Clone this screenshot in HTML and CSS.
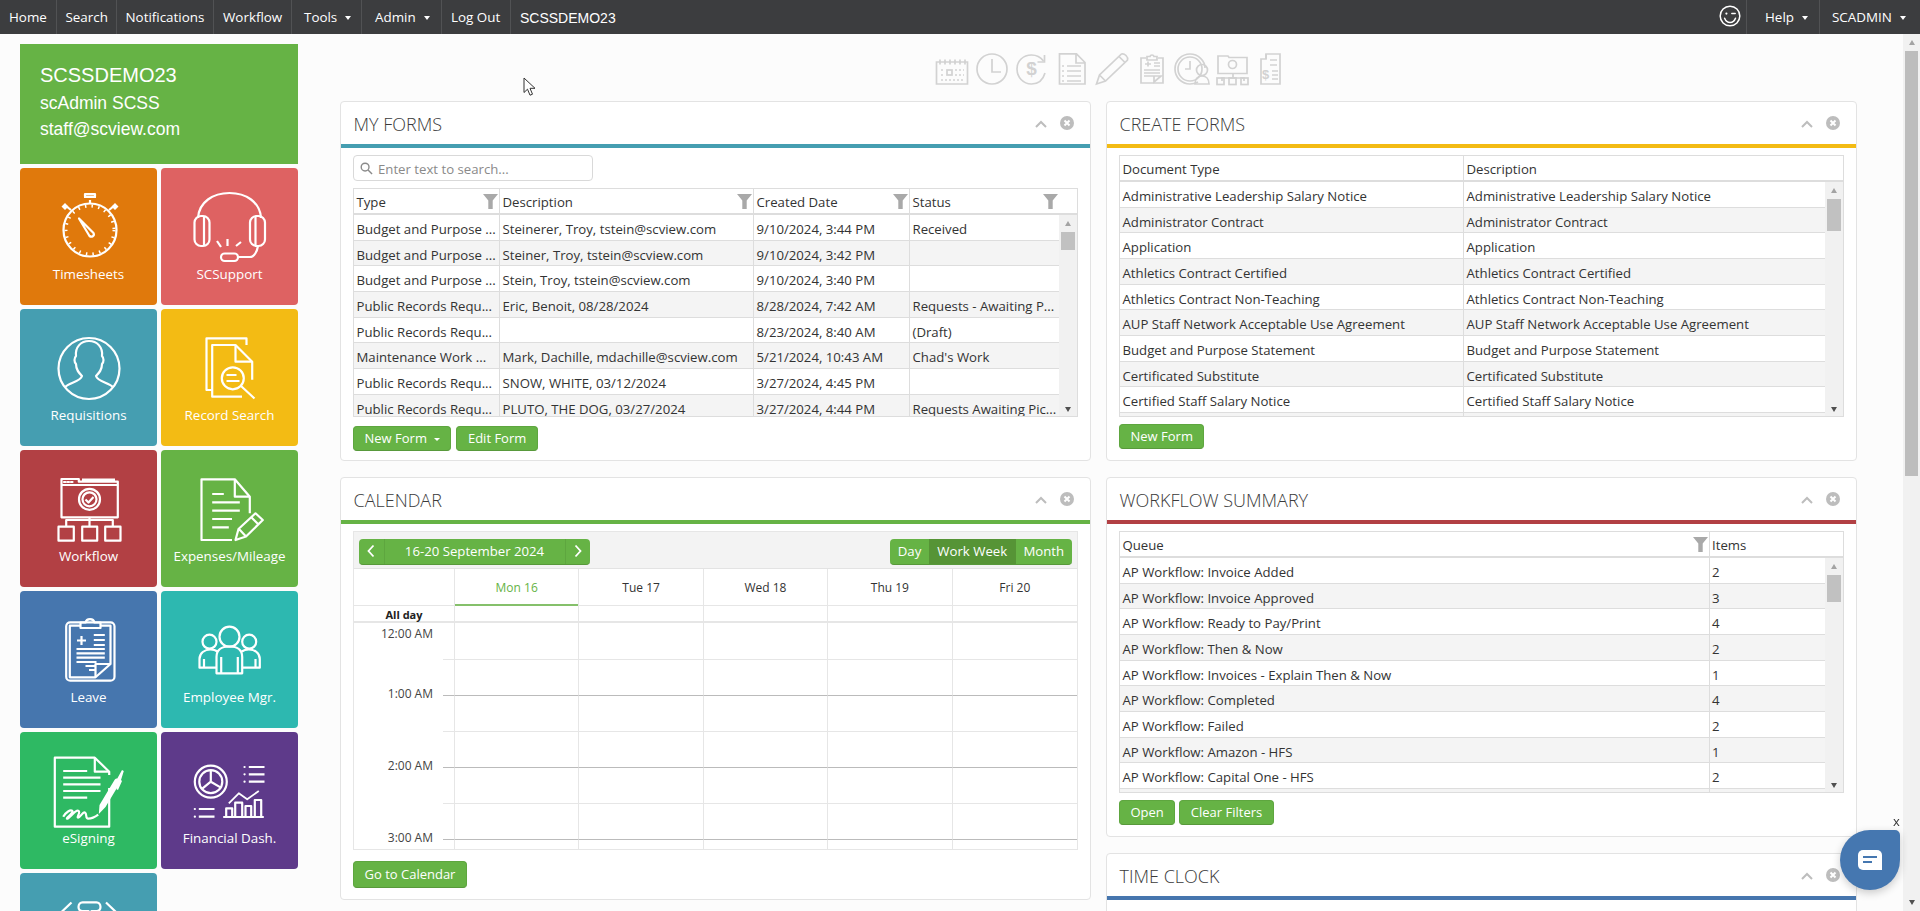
FILE: index.html
```html
<!DOCTYPE html>
<html lang="en">
<head>
<meta charset="utf-8">
<title>SCSSDEMO23</title>
<link rel="stylesheet" href="styles.css">
</head>
<body>
<div class="app">
  <nav class="topbar">
    <a class="nav-item nav-home">Home</a>
    <a class="nav-item nav-search">Search</a>
    <a class="nav-item nav-notif">Notifications</a>
    <a class="nav-item nav-flow">Workflow</a>
    <a class="nav-item nav-tools">Tools<i class="caret"></i></a>
    <a class="nav-item nav-admin">Admin<i class="caret"></i></a>
    <a class="nav-item nav-logout">Log Out</a>
    <span class="nav-org">SCSSDEMO23</span>
    <span class="nav-spacer"></span>
    <span class="nav-smile">
      <svg viewBox="0 0 22 22" width="22" height="22" fill="none" stroke="#fff" stroke-width="1.5" stroke-linecap="round"><circle cx="11" cy="11" r="9.8"/><circle cx="7.4" cy="8.6" r="1.1" fill="#fff" stroke="none"/><path d="M12.8 8.6h3.4"/><path d="M5.6 13.2c1.2 3 3.3 4.2 5.5 4.2s4.3-1.200 5.400-4.200"/></svg>
    </span>
    <a class="nav-item nav-help">Help<i class="caret"></i></a>
    <a class="nav-item nav-user">SCADMIN<i class="caret"></i></a>
  </nav>

  <div class="content">
    <aside class="sidebar">
      <div class="profile">
        <div class="profile-org">SCSSDEMO23</div>
        <div class="profile-line">scAdmin SCSS</div>
        <div class="profile-line">staff@scview.com</div>
      </div>
      <div class="tiles">
        <a class="tile t-orange">
          <svg class="ticon" viewBox="0 0 80 76"><circle cx="41" cy="42" r="26.500"/><circle class="ticks" cx="41" cy="42" r="24"/><path d="M41 15.500V12M35 9h12M36 8.500h10v-2.500H36zM22 22l-5-4M60 22l5-4"/><path class="solid" d="M12.500 18.500l3.500-3.500 3.500 3.500-3.500 3.500zM62.500 18.500l3.500-3.500 3.500 3.500-3.500 3.500z"/><path d="M30 30.500l14.500 14.500c1.500 3-2 4.500-4 3z"/></svg>
          <span>Timesheets</span>
        </a>
        <a class="tile t-pink">
          <svg class="ticon" viewBox="0 0 80 76"><path d="M8 30C9 14 23 5 39.500 5S70 14 71 30"/><rect x="4.500" y="28" width="15" height="30" rx="6.500"/><path d="M14 28v30"/><rect x="60" y="28" width="15" height="30" rx="6.500"/><path d="M65.500 28v30"/><path d="M37.500 51v7M27 53l4 6M51 54l-5 4"/><path d="M68 58c-1 6-4 11-8 11H48"/><rect x="31" y="65.500" width="17" height="7.500" rx="3.700"/></svg>
          <span>SCSupport</span>
        </a>
        <a class="tile t-teal">
          <svg class="ticon" viewBox="0 0 80 76"><circle cx="40" cy="39.500" r="30.500"/><path d="M16 58c5-5 15-5 17-11-3-3-6-6-6-12-2-2-2-6 0-8-1-9 5-15 13-15s14 6 13 15c2 2 2 6 0 8 0 6-3 9-6 12 2 6 12 6 17 11"/></svg>
          <span>Requisitions</span>
        </a>
        <a class="tile t-yellow">
          <svg class="ticon" viewBox="0 0 80 76"><path d="M22 61h-5.500V9.300h40V16"/><path d="M52 67.700H22.200V16h23.300L62.200 32.700v18"/><path d="M45.500 16v16.700h16.700"/><circle cx="42.800" cy="49.300" r="11"/><path d="M51 57l13.500 12.500M36.500 46h10M36.500 52h13"/></svg>
          <span>Record Search</span>
        </a>
        <a class="tile t-red">
          <svg class="ticon" viewBox="0 0 80 76"><path d="M12.500 47.300V9h17.300v2.700h39v35.600zM12.500 15h56M33 9.500h33"/><path class="dotted" d="M15 12h9"/><circle cx="40.500" cy="29.300" r="10.500"/><circle cx="40.500" cy="29.300" r="7"/><path d="M36.500 29.500l3 3 5-5.500"/><path d="M40.500 47.300V56M17.200 56.700V50h46.600v6.700"/><rect x="9.500" y="56.700" width="15.300" height="14"/><rect x="33.200" y="56.700" width="15" height="14"/><rect x="56.200" y="56.700" width="15.300" height="14"/></svg>
          <span>Workflow</span>
        </a>
        <a class="tile t-green">
          <svg class="ticon" viewBox="0 0 80 76"><path d="M42 70H11.500V9.300h33.300L59.800 26.700v16.600"/><path d="M44.800 9.300v17.400h15M22.200 24h11.600M22.200 32.300h27.600M22.200 40.700h27.600M22.200 49h19.800M22.200 57.300h16.600"/><path d="M45.500 70l3-11 17-15.700 7.300 6.700L56 66.500zM49 59l7 7.500M61.500 47.500l7 7"/></svg>
          <span>Expenses/Mileage</span>
        </a>
        <a class="tile t-blue">
          <svg class="ticon" viewBox="0 0 80 76"><rect x="17.200" y="11.300" width="48.300" height="58.400" rx="4"/><path d="M31.500 14.700H20.800v51.600h25.700L61.500 53V14.700H51.500"/><path d="M31.500 17v-5.500h5c1-4.500 8-4.500 9 0h6V17z"/><path d="M32.500 25v9M28 29.500h9M44.800 24h11M44.800 29h11M44.800 34h11M27.500 38h28.300M27.500 42.300h28.300M27.500 46.700h28.300M27.500 51h20M36.500 55h10M40 59h6.500"/><path d="M46.500 66.300V53H61.500"/></svg>
          <span>Leave</span>
        </a>
        <a class="tile t-aqua">
          <svg class="ticon" viewBox="0 0 80 76"><circle cx="39.500" cy="25.700" r="10"/><path d="M26.500 62.300V46c0-7 5-10.500 13-10.500s12.700 3.500 12.700 10.500v16.300zM31.200 46v16M47.800 46v16"/><circle cx="19.500" cy="30.700" r="7"/><circle cx="59.200" cy="30.700" r="7"/><path d="M26.500 56.700H9.500V48c0-6 5-9.500 11-9.500 3 0 5 .5 7 2M52.500 56.700h17.300V48c0-6-5-9.500-11-9.500-3 0-5 .5-7 2M14 48v8.500M65.500 48v8.500"/></svg>
          <span>Employee Mgr.</span>
        </a>
        <a class="tile t-sign">
          <svg class="ticon" viewBox="0 0 80 76"><path d="M60.200 36v38.700H5.800v-69h40L60.200 19.700V23"/><path d="M45.800 5.700v14h14.400M14.200 19h24M14.200 25.700h37.300M14.200 32.300h37.300M14.200 39h37.300M14.200 45.700h24"/><path class="solid" d="M49.800 62l.7-9 15-25c2-3 7-1 6 2l-15 25zM68 27l5-9 1.800 1-2.800 9 1 1-4 9-1.500-.7 3-8.300z"/><path d="M14.200 64.700c3-5 7-7 9-6 2 2-7 8-5 8s8-9 11-8-2 7 0 7 5-7 7-5 0 6 3 6 6-1 10-4"/></svg>
          <span>eSigning</span>
        </a>
        <a class="tile t-purple">
          <svg class="ticon" viewBox="0 0 80 76"><circle cx="20.800" cy="29.700" r="16"/><circle cx="20.800" cy="29.700" r="11.500"/><path d="M20.800 18.500v11.200l9.700 5.700M20.800 29.700l-8.500 7"/><path d="M58.800 15h15.700M58.800 22.300h15.700M58.800 29.700h15.700M8.800 57h15.700M8.800 64.700h15.700M33.200 65h40.600M36.200 65v-8.700h6V65M45.200 65V50.700h7V65M55.500 65V54h5.700v11M64.800 65V48h6.400v17"/><path class="thin" d="M38.800 51.300l10-10 8.400 6 11.600-8.300"/><path class="dotted" d="M54.500 15h.1M54.500 22.300h.1M54.500 29.700h.1M4.800 57h.1M4.800 64.700h.1"/></svg>
          <span>Financial Dash.</span>
        </a>
        <a class="tile t-teal">
          <svg class="ticon" viewBox="0 0 80 76"><path d="M11.500 20l11-10.500M68 20L57 9.500M29.500 14c0-3 2-4.700 4-4.700h14c2 0 4 1.700 4 4.700s-2 4-4 4h-5v9h-3v-9h-6c-2 0-4-1-4-4z"/></svg>
        </a>
      </div>
    </aside>

    <main class="main">
      <div class="quick-icons">
        <svg viewBox="0 0 40 32"><path d="M4.500 9h31v22h-31zM8 6.500v5M13 6.500v5M18 6.500v5M23 6.500v5M28 6.500v5M33 6.500v5"/><rect x="15" y="17" width="5" height="5"/><path class="dots" d="M9 17h3M23 17h9M9 22h3M23 22h9M9 27h23"/></svg>
        <svg viewBox="0 0 40 32"><circle cx="20" cy="16" r="15"/><path d="M20 6v13h9"/></svg>
        <svg viewBox="0 0 40 32"><path d="M33 20c-2 7-7 11-13.500 11C11 31 5 24 5 16S11 2 19.500 2c5 0 9 2 12 6"/><path d="M32.500 2v7h-7"/><text x="19.500" y="22" class="glyph">$</text></svg>
        <svg viewBox="0 0 40 32"><path d="M7.500 31V.800h17L33 9.500V31zM24 1v9h9"/><path d="M15 13h14M15 18h14M15 23h14M15 28h14M10 13h2M10 18h2M10 23h2M10 28h2"/></svg>
        <svg viewBox="0 0 40 32"><path d="M4.500 31l3-9 22-21c3-1 7 3 6 6l-22 21zM7.500 22l6 6M27 3.500l6 6"/></svg>
        <svg viewBox="0 0 40 32"><path d="M14 5H9v25h22V5h-5M15 7V3.500h3c.5-2 3.500-2 4 0h3V7z"/><path d="M13 11h6M16 8.500v5M22 10h6M22 13h6M12 17h16M12 20h16M12 23h10M22 29l7-6h-7z"/></svg>
        <svg viewBox="0 0 40 32"><path d="M26 29c-2 1-4 2-8 2C9.700 31 3 24.300 3 16S9.700 1 18 1s15 6.700 15 14"/><circle cx="18" cy="16" r="12"/><path d="M18 8v8h-5"/><circle cx="30" cy="17" r="5.500"/><path d="M23 31c0-5 3-8 7-8s7 3 7 8z"/></svg>
        <svg viewBox="0 0 40 32"><path d="M6 20.500V3h10l1 1.500h18v16zM21 20.500V25M10 28v-3h22v3"/><circle cx="20.500" cy="11.500" r="4"/><rect x="5" y="25" width="7" height="6.500"/><rect x="17" y="25" width="7" height="6.500"/><rect x="29" y="25" width="7" height="6.500"/></svg>
        <svg viewBox="0 0 40 32"><path d="M9 6v25h19V1H14v5H9z"/><path d="M14 1v5M18 7h7M18 12h7M20 18h6M20 22h6M20 26h6"/><text x="13.500" y="26" class="glyph-small">$</text></svg>
      </div>

      <div class="columns">
        <div class="column">
          <section class="panel">
            <header class="panel-head"><h2>MY FORMS</h2><span class="panel-ctl"><svg class="chev" viewBox="0 0 12 8"><path d="M1 7l5-5 5 5"/></svg><svg class="close" viewBox="0 0 14 14"><circle cx="7" cy="7" r="7"/><path d="M4.500 4.500l5 5M9.500 4.500l-5 5"/></svg></span></header>
            <div class="panel-bar bar-teal"></div>
            <div class="panel-body body-forms">
              <div class="search-box">
                <svg viewBox="0 0 14 14" width="13" height="13" fill="none" stroke="#8a8a8a" stroke-width="1.500"><circle cx="5.500" cy="5.500" r="4.200"/><path d="M8.700 8.700l4.300 4.300"/></svg>
                <span>Enter text to search...</span>
              </div>
              <div class="grid grid-forms">
                <div class="grid-head cols-forms">
                  <div class="hcell">Type<svg class="filter" viewBox="0 0 15 15"><path d="M0 0h15l-5.300 6.500V15H5.300V6.500z"/></svg></div>
                  <div class="hcell">Description<svg class="filter" viewBox="0 0 15 15"><path d="M0 0h15l-5.300 6.500V15H5.300V6.500z"/></svg></div>
                  <div class="hcell">Created Date<svg class="filter" viewBox="0 0 15 15"><path d="M0 0h15l-5.300 6.500V15H5.300V6.500z"/></svg></div>
                  <div class="hcell hcell-last">Status<svg class="filter" viewBox="0 0 15 15"><path d="M0 0h15l-5.300 6.500V15H5.300V6.500z"/></svg></div>
                </div>
                <div class="grid-body">
                  <div class="rows">
                    <div class="row cols-forms"><div>Budget and Purpose ...</div><div>Steinerer, Troy, tstein@scview.com</div><div>9/10/2024, 3:44 PM</div><div>Received</div></div>
                    <div class="row cols-forms"><div>Budget and Purpose ...</div><div>Steiner, Troy, tstein@scview.com</div><div>9/10/2024, 3:42 PM</div><div></div></div>
                    <div class="row cols-forms"><div>Budget and Purpose ...</div><div>Stein, Troy, tstein@scview.com</div><div>9/10/2024, 3:40 PM</div><div></div></div>
                    <div class="row cols-forms"><div>Public Records Requ...</div><div>Eric, Benoit, 08/28/2024</div><div>8/28/2024, 7:42 AM</div><div>Requests - Awaiting P...</div></div>
                    <div class="row cols-forms"><div>Public Records Requ...</div><div></div><div>8/23/2024, 8:40 AM</div><div>(Draft)</div></div>
                    <div class="row cols-forms"><div>Maintenance Work ...</div><div>Mark, Dachille, mdachille@scview.com</div><div>5/21/2024, 10:43 AM</div><div>Chad's Work</div></div>
                    <div class="row cols-forms"><div>Public Records Requ...</div><div>SNOW, WHITE, 03/12/2024</div><div>3/27/2024, 4:45 PM</div><div></div></div>
                    <div class="row row-clipped cols-forms"><div>Public Records Requ...</div><div>PLUTO, THE DOG, 03/27/2024</div><div>3/27/2024, 4:44 PM</div><div>Requests Awaiting Pic...</div></div>
                  </div>
                  <div class="vscroll"><i class="arrow-up"></i><i class="thumb thumb-forms"></i><b></b><i class="arrow-down"></i></div>
                </div>
              </div>
              <div class="btn-row"><a class="btn btn-caret">New Form<i class="caret"></i></a><a class="btn">Edit Form</a></div>
            </div>
          </section>

          <section class="panel">
            <header class="panel-head"><h2>CALENDAR</h2><span class="panel-ctl"><svg class="chev" viewBox="0 0 12 8"><path d="M1 7l5-5 5 5"/></svg><svg class="close" viewBox="0 0 14 14"><circle cx="7" cy="7" r="7"/><path d="M4.500 4.500l5 5M9.500 4.500l-5 5"/></svg></span></header>
            <div class="panel-bar bar-green"></div>
            <div class="panel-body">
              <div class="sched">
                <div class="sched-bar">
                  <div class="btn-group group-date">
                    <a class="seg seg-arrow"><svg viewBox="0 0 8 14" width="8" height="14"><path d="M6.500 1.500L1.500 7l5 5.500"/></svg></a>
                    <a class="seg seg-date">16-20 September 2024</a>
                    <a class="seg seg-arrow"><svg viewBox="0 0 8 14" width="8" height="14"><path d="M1.500 1.500L6.500 7l-5 5.500"/></svg></a>
                  </div>
                  <div class="btn-group group-view">
                    <a class="seg seg-day">Day</a>
                    <a class="seg seg-week">Work Week</a>
                    <a class="seg seg-month">Month</a>
                  </div>
                </div>
                <div class="cal-head">
                  <div class="cal-corner"></div>
                  <div class="cal-day cal-today">Mon 16</div>
                  <div class="cal-day">Tue 17</div>
                  <div class="cal-day">Wed 18</div>
                  <div class="cal-day">Thu 19</div>
                  <div class="cal-day">Fri 20</div>
                </div>
                <div class="cal-allday">
                  <div class="allday-label">All day</div>
                  <div></div><div></div><div></div><div></div><div></div>
                </div>
                <div class="cal-slots">
                  <div class="slot slot-first slot-light"><div class="tlabel tlabel-first">12:00 AM</div><div class="tick"></div><div></div><div></div><div></div><div></div><div></div></div>
                  <div class="slot"><div class="tlabel">1:00 AM</div><div class="tick"></div><div></div><div></div><div></div><div></div><div></div></div>
                  <div class="slot slot-light"><div class="tlabel"></div><div class="tick"></div><div></div><div></div><div></div><div></div><div></div></div>
                  <div class="slot"><div class="tlabel">2:00 AM</div><div class="tick"></div><div></div><div></div><div></div><div></div><div></div></div>
                  <div class="slot slot-light"><div class="tlabel"></div><div class="tick"></div><div></div><div></div><div></div><div></div><div></div></div>
                  <div class="slot"><div class="tlabel">3:00 AM</div><div class="tick"></div><div></div><div></div><div></div><div></div><div></div></div>
                  <div class="slot slot-light"><div class="tlabel"></div><div class="tick"></div><div></div><div></div><div></div><div></div><div></div></div>
                </div>
              </div>
              <div class="btn-row btn-row-cal"><a class="btn btn-tall">Go to Calendar</a></div>
            </div>
          </section>
        </div>

        <div class="column">
          <section class="panel">
            <header class="panel-head"><h2>CREATE FORMS</h2><span class="panel-ctl"><svg class="chev" viewBox="0 0 12 8"><path d="M1 7l5-5 5 5"/></svg><svg class="close" viewBox="0 0 14 14"><circle cx="7" cy="7" r="7"/><path d="M4.500 4.500l5 5M9.500 4.500l-5 5"/></svg></span></header>
            <div class="panel-bar bar-yellow"></div>
            <div class="panel-body">
              <div class="grid grid-create">
                <div class="grid-head cols-create">
                  <div class="hcell">Document Type</div>
                  <div class="hcell hcell-last">Description</div>
                </div>
                <div class="grid-body">
                  <div class="rows">
                    <div class="row cols-create"><div>Administrative Leadership Salary Notice</div><div>Administrative Leadership Salary Notice</div></div>
                    <div class="row cols-create"><div>Administrator Contract</div><div>Administrator Contract</div></div>
                    <div class="row cols-create"><div>Application</div><div>Application</div></div>
                    <div class="row cols-create"><div>Athletics Contract Certified</div><div>Athletics Contract Certified</div></div>
                    <div class="row cols-create"><div>Athletics Contract Non-Teaching</div><div>Athletics Contract Non-Teaching</div></div>
                    <div class="row cols-create"><div>AUP Staff Network Acceptable Use Agreement</div><div>AUP Staff Network Acceptable Use Agreement</div></div>
                    <div class="row cols-create"><div>Budget and Purpose Statement</div><div>Budget and Purpose Statement</div></div>
                    <div class="row cols-create"><div>Certificated Substitute</div><div>Certificated Substitute</div></div>
                    <div class="row cols-create"><div>Certified Staff Salary Notice</div><div>Certified Staff Salary Notice</div></div>
                    <div class="row cols-create"><div></div><div></div></div>
                  </div>
                  <div class="vscroll"><i class="arrow-up"></i><i class="thumb thumb-create"></i><b></b><i class="arrow-down"></i></div>
                </div>
              </div>
              <div class="btn-row btn-row-tight"><a class="btn">New Form</a></div>
            </div>
          </section>

          <section class="panel">
            <header class="panel-head"><h2>WORKFLOW SUMMARY</h2><span class="panel-ctl"><svg class="chev" viewBox="0 0 12 8"><path d="M1 7l5-5 5 5"/></svg><svg class="close" viewBox="0 0 14 14"><circle cx="7" cy="7" r="7"/><path d="M4.500 4.500l5 5M9.500 4.500l-5 5"/></svg></span></header>
            <div class="panel-bar bar-red"></div>
            <div class="panel-body">
              <div class="grid grid-create">
                <div class="grid-head cols-flow">
                  <div class="hcell">Queue<svg class="filter" viewBox="0 0 15 15"><path d="M0 0h15l-5.300 6.500V15H5.300V6.500z"/></svg></div>
                  <div class="hcell hcell-last">Items</div>
                </div>
                <div class="grid-body">
                  <div class="rows">
                    <div class="row cols-flow"><div>AP Workflow: Invoice Added</div><div>2</div></div>
                    <div class="row cols-flow"><div>AP Workflow: Invoice Approved</div><div>3</div></div>
                    <div class="row cols-flow"><div>AP Workflow: Ready to Pay/Print</div><div>4</div></div>
                    <div class="row cols-flow"><div>AP Workflow: Then &amp; Now</div><div>2</div></div>
                    <div class="row cols-flow"><div>AP Workflow: Invoices - Explain Then &amp; Now</div><div>1</div></div>
                    <div class="row cols-flow"><div>AP Workflow: Completed</div><div>4</div></div>
                    <div class="row cols-flow"><div>AP Workflow: Failed</div><div>2</div></div>
                    <div class="row cols-flow"><div>AP Workflow: Amazon - HFS</div><div>1</div></div>
                    <div class="row cols-flow"><div>AP Workflow: Capital One - HFS</div><div>2</div></div>
                    <div class="row cols-flow"><div></div><div></div></div>
                  </div>
                  <div class="vscroll"><i class="arrow-up"></i><i class="thumb thumb-flow"></i><b></b><i class="arrow-down"></i></div>
                </div>
              </div>
              <div class="btn-row btn-row-tight"><a class="btn">Open</a><a class="btn">Clear Filters</a></div>
            </div>
          </section>

          <section class="panel">
            <header class="panel-head"><h2>TIME CLOCK</h2><span class="panel-ctl"><svg class="chev" viewBox="0 0 12 8"><path d="M1 7l5-5 5 5"/></svg><svg class="close" viewBox="0 0 14 14"><circle cx="7" cy="7" r="7"/><path d="M4.500 4.500l5 5M9.500 4.500l-5 5"/></svg></span></header>
            <div class="panel-bar bar-blue"></div>
            <div class="body-clock"></div>
          </section>
        </div>
      </div>
    </main>

    <div class="page-scroll"><i class="arrow-up"></i><i class="page-thumb"></i><b></b><i class="arrow-down"></i></div>
  </div>

  <svg class="mouse" viewBox="0 0 13 20" width="13" height="20"><path d="M1 1v14.500l3.500-3.300 2.500 6 2.500-1-2.500-5.900h5z" fill="#fff" stroke="#333" stroke-width="1"/></svg>

  <span class="chat-x">x</span>
  <div class="chat">
    <svg viewBox="0 0 24 20" width="24" height="20"><path d="M5 0h14a5 5 0 0 1 5 5v15H5a5 5 0 0 1-5-5V5a5 5 0 0 1 5-5z" fill="#fff"/><path d="M5 7h14M5 12h9" stroke="#4577b0" stroke-width="2.200" fill="none"/></svg>
  </div>
</div>
</body>
</html>
```
FILE: styles.css
```css
* { box-sizing: border-box; }
html, body { margin: 0; height: 100%; overflow: hidden; }
body { font-family: "Open Sans", "Liberation Sans", sans-serif; font-size: 13.2px; color: #333; background: #fcfcfc; }
a { color: inherit; text-decoration: none; }
.app { height: 911px; display: flex; flex-direction: column; overflow: hidden; }

/* top bar */
.topbar { height: 34px; flex: none; display: flex; align-items: stretch; background: #3c3d3f; color: #fff; line-height: 34px; font-size: 13.4px; }
.nav-item { display: block; flex: none; padding-left: 9px; border-right: 1px solid #515254; white-space: nowrap; }
.nav-home { width: 56.500px; }
.nav-search { width: 60px; }
.nav-notif { width: 97.500px; }
.nav-flow { width: 78px; }
.nav-tools { width: 70px; padding-left: 12px; }
.nav-admin { width: 80px; padding-left: 13px; }
.nav-logout { width: 69px; padding-left: 9px; }
.nav-org { padding-left: 9px; font-family: "Liberation Sans", Arial, sans-serif; font-size: 14px; line-height: 37px; }
.nav-spacer { flex: 1; }
.nav-smile { width: 28px; flex: none; display: flex; align-items: center; border-right: 1px solid #515254; padding-bottom: 2px; }
.nav-help { width: 73px; padding-left: 18px; }
.nav-user { width: 100px; padding-left: 12px; border-right: 0; }
.caret { display: inline-block; width: 0; height: 0; margin-left: 8px; vertical-align: 2px; border-left: 3.5px solid transparent; border-right: 3.5px solid transparent; border-top: 4px solid currentColor; }

.content { flex: 1; min-height: 0; display: flex; }

/* sidebar */
.sidebar { width: 298px; flex: none; padding: 10px 0 0 20px; }
.profile { height: 120px; background: #66b345; color: #fff; padding: 19px 20px 0; font-family: "Liberation Sans", Arial, sans-serif; margin-bottom: 4px; }
.profile-org { font-size: 20px; line-height: 24px; margin-bottom: 3px; }
.profile-line { font-size: 17.5px; line-height: 26px; }
.tiles { display: grid; grid-template-columns: 137px 137px; grid-auto-rows: 137px; column-gap: 4px; row-gap: 4px; }
.tile { border-radius: 4px; padding-top: 20px; color: #fff; display: flex; flex-direction: column; align-items: center; text-align: center; line-height: 18px; font-size: 13.4px; }
.tile span { margin-top: 1px; }
.ticon { width: 80px; height: 76px; flex: none; fill: none; stroke: #fff; stroke-width: 2.200; overflow: visible; stroke-linejoin: round; }
.ticon .solid { fill: #fff; stroke: none; }
.ticon .ticks { stroke-dasharray: 1.500 5.200; stroke-width: 3; }
.ticon .dotted { stroke-dasharray: 1.500 2; stroke-linecap: round; }
.ticon .thin { stroke-width: 1.800; }
.t-orange { background: #e0790c; }
.t-pink { background: #de6262; }
.t-teal { background: #459eb1; }
.t-yellow { background: #f3bb14; }
.t-red { background: #b24044; }
.t-green { background: #66b345; }
.t-blue { background: #4676ae; }
.t-aqua { background: #2db8b0; }
.t-sign { background: #2eb963; }
.t-purple { background: #5e3a8a; }

/* main */
.main { flex: 1; min-width: 0; padding: 19px 0 0 42px; overflow: hidden; }
.quick-icons { display: flex; height: 48px; padding-left: 592px; align-items: flex-start; }
.quick-icons svg { width: 40px; height: 32px; flex: none; fill: none; stroke: #d2d2d2; stroke-width: 1.700; overflow: visible; }
.quick-icons .dots { stroke-dasharray: 2 2; stroke-width: 1.500; }
.quick-icons .glyph { font-family: "Liberation Sans", sans-serif; font-size: 19px; font-weight: 700; fill: #d2d2d2; stroke: none; text-anchor: middle; }
.quick-icons .glyph-small { font-family: "Liberation Sans", sans-serif; font-size: 13px; font-weight: 700; fill: #d2d2d2; stroke: none; text-anchor: middle; }
.columns { display: grid; grid-template-columns: 751px 751px; column-gap: 15px; }
.column { display: flex; flex-direction: column; gap: 16px; }

.panel { background: #fff; border: 1px solid #e3e3e3; border-radius: 4px; flex: none; }
.panel-head { height: 42px; display: flex; align-items: center; justify-content: space-between; padding: 2px 16px 0 12.500px; }
.panel-head h2 { margin: 0; font-size: 18px; font-weight: 300; color: #3a3a3a; line-height: 24px; }
.panel-ctl { display: flex; align-items: flex-start; gap: 13px; height: 100%; padding-top: 12px; }
.chev { width: 12px; height: 8px; margin-top: 4px; fill: none; stroke: #bdbdbd; stroke-width: 2; }
.close { width: 14px; height: 14px; fill: #bdbdbd; stroke: #fff; stroke-width: 2; }
.close circle { stroke: none; }
.panel-bar { height: 4px; }
.bar-teal { background: #459eb1; }
.bar-green { background: #66b345; }
.bar-yellow { background: #f3bb14; }
.bar-red { background: #b24044; }
.bar-blue { background: #4676ae; }
.panel-body { padding: 7px 12px 11px; }
.body-forms { padding-bottom: 9px; }
.body-clock { height: 60px; }

.search-box { width: 240px; height: 26px; border: 1px solid #d9d9d9; border-radius: 4px; display: flex; align-items: center; gap: 5px; padding: 1px 0 0 6px; color: #8a8a8a; margin-bottom: 7px; }

/* grids */
.grid { border: 1px solid #ddd; background: #fff; }
.grid-forms { height: 229px; }
.grid-create { height: 262px; }
.grid-head { height: 26px; border-bottom: 2px solid #ddd; }
.grid-head .hcell { position: relative; line-height: 27px; padding-left: 2.500px; border-right: 1px solid #ddd; color: #333; }
.grid-head .hcell-last { border-right: 0; }
.filter { position: absolute; top: 5px; right: 1px; width: 15px; height: 15px; fill: #a9a9a9; }
.cols-forms, .cols-create, .cols-flow { display: grid; }
.cols-forms { grid-template-columns: 146px 254px 156px 1fr; }
.grid-forms .grid-head .hcell-last .filter { right: 19px; }
.cols-create { grid-template-columns: 344px 1fr; }
.cols-flow { grid-template-columns: 589.500px 1fr; }
.grid-body { display: flex; height: calc(100% - 26px); overflow: hidden; }
.rows { flex: 1; min-width: 0; overflow: hidden; }
.row { height: 25.670px; border-bottom: 1px solid #ddd; line-height: 16px; white-space: nowrap; }
.row-clipped { height: 21.600px; border-bottom: 0; }
.row > div { padding: 6px 0 0 2.500px; border-right: 1px solid #ddd; overflow: hidden; height: 100%; }
.row > div:last-child { border-right: 0; }
.row:nth-child(even) { background: #f4f4f4; }
.vscroll { width: 18px; flex: none; background: #f1f1f1; display: flex; flex-direction: column; align-items: center; padding: 6px 0 4px; }
.vscroll b { flex: 1; }
.arrow-up, .arrow-down { display: block; width: 0; height: 0; flex: none; border-left: 3.500px solid transparent; border-right: 3.500px solid transparent; }
.arrow-up { border-bottom: 5px solid #a3a3a3; }
.arrow-down { border-top: 5px solid #505050; }
.thumb { display: block; width: 14px; flex: none; background: #c1c1c1; margin-top: 6px; }
.thumb-forms { height: 18px; }
.thumb-create { height: 32px; }
.thumb-flow { height: 27px; }

/* buttons */
.btn-row { display: flex; gap: 5px; margin-top: 9px; }
.btn-row-tight { margin-top: 7px; gap: 4px; }
.btn-row-cal { margin-top: 11px; }
.btn { display: block; height: 25px; line-height: 23px; padding: 0 10.500px; background: #66b345; border: 1px solid #5ea63f; border-bottom-color: #58993b; border-radius: 4px; color: #fff; font-size: 13px; white-space: nowrap; }
.btn-tall { height: 27px; line-height: 25px; }
.btn-caret .caret { margin-left: 7px; vertical-align: 2px; border-left-width: 3px; border-right-width: 3px; border-top-width: 3.500px; }

/* scheduler */
.sched { border: 1px solid #e6e6e6; height: 319px; overflow: hidden; }
.sched-bar { height: 37px; background: #f3f3f3; border-bottom: 1px solid #e3e3e3; display: flex; justify-content: space-between; padding: 7px 5px 0; }
.btn-group { display: flex; height: 26px; border-radius: 4px; overflow: hidden; background: #66b345; border-bottom: 1px solid #58993b; color: #fff; line-height: 25px; }
.seg { display: flex; align-items: center; justify-content: center; white-space: nowrap; }
.group-date { width: 231px; }
.seg-arrow { width: 25.500px; border-right: 1px solid #5ea63f; padding-bottom: 2px; }
.seg-arrow:last-child { border-right: 0; border-left: 1px solid #5ea63f; }
.seg-arrow svg { fill: none; stroke: #fff; stroke-width: 1.800; }
.seg-date { flex: 1; }
.group-view { width: 182px; }
.seg-day { width: 39px; }
.seg-week { width: 86.500px; background: #569436; }
.seg-month { flex: 1; }
.cal-head, .cal-allday { display: grid; grid-template-columns: 101px repeat(5, 1fr); }
.cal-head { height: 37px; border-bottom: 1px solid #e6e6e6; }
.cal-corner { border-right: 1px solid #e6e6e6; }
.cal-day { border-right: 1px solid #e6e6e6; text-align: center; font-size: 12px; line-height: 38px; color: #333; position: relative; }
.cal-day:last-child { border-right: 0; }
.cal-today { color: #66b345; }
.cal-today::after { content: ""; position: absolute; left: 0; right: 0; bottom: 1px; height: 2px; background: #85c06b; }
.cal-allday { height: 17px; border-bottom: 2px solid #e6e6e6; }
.cal-allday > div { border-right: 1px solid #e6e6e6; }
.cal-allday > div:last-child { border-right: 0; }
.allday-label { font-size: 11px; font-weight: 700; text-align: center; line-height: 18px; color: #222; }
.slot { display: grid; height: 36px; grid-template-rows: 36px; grid-template-columns: 79px 22px repeat(5, 1fr); }
.slot-first { height: 37px; grid-template-rows: 37px; }
.slot > div { border-bottom: 1px solid #bbb; border-right: 1px solid #e6e6e6; }
.slot > div:last-child { border-right: 0; }
.slot-light > div { border-bottom-color: #e6e6e6; }
.slot > .tlabel { border: 0; font-size: 12px; line-height: 14px; padding-top: 27px; text-align: right; white-space: nowrap; color: #444; }
.slot > .tlabel-first { padding-top: 4px; }
.slot > .tick { margin-left: 10px; }

/* page scrollbar */
.page-scroll { width: 17px; flex: none; background: #f1f1f1; display: flex; flex-direction: column; align-items: center; padding: 6px 0; }
.page-scroll b { flex: 1; }
.page-thumb { display: block; width: 13px; height: 425px; background: #bdbdbd; flex: none; margin-top: 6px; }

/* overlays */
.mouse { position: absolute; left: 523px; top: 77px; }
.chat { position: fixed; left: 1840px; top: 830px; width: 60px; height: 60px; border-radius: 50% 5px 50% 50%; background: #4577b0; box-shadow: 0 3px 8px rgba(0,0,0,.2); display: flex; align-items: center; justify-content: center; }
.chat-x { position: fixed; left: 1893px; top: 812px; font-size: 13px; color: #333; line-height: 18px; }
```
